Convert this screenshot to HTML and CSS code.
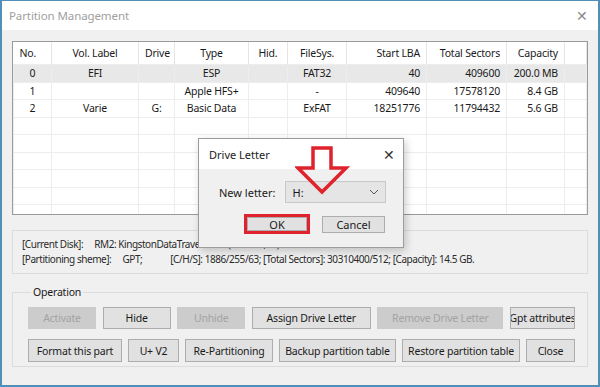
FILE: index.html
```html
<!DOCTYPE html>
<html lang="en">
<head>
    <meta charset="UTF-8">
    <meta name="viewport" content="width=device-width, initial-scale=1.0">
    <title>Partition Management</title>
    <link rel="stylesheet" href="styles.css">
</head>
<body>
    <div class="window">
        <!-- Title bar -->
        <header class="title-bar">
            <span class="title">Partition Management</span>
            <span class="close">&#x2715;</span>
        </header>

        <div class="content">
            <!-- Partition list -->
            <div class="list-view">
                <table class="grid">
                    <colgroup>
                        <col class="c-no"><col class="c-label"><col class="c-drive"><col class="c-type"><col class="c-hid">
                        <col class="c-fs"><col class="c-lba"><col class="c-sec"><col class="c-cap"><col>
                    </colgroup>
                    <thead>
                        <tr>
                            <th class="left">No.</th>
                            <th>Vol. Label</th>
                            <th>Drive</th>
                            <th>Type</th>
                            <th>Hid.</th>
                            <th>FileSys.</th>
                            <th class="right">Start LBA</th>
                            <th class="right">Total Sectors</th>
                            <th class="right">Capacity</th>
                            <th></th>
                        </tr>
                    </thead>
                    <tbody>
                        <tr class="selected">
                            <td>0</td><td>EFI</td><td></td><td>ESP</td><td></td><td>FAT32</td>
                            <td class="right">40</td><td class="right">409600</td><td class="right">200.0 MB</td><td></td>
                        </tr>
                        <tr>
                            <td>1</td><td></td><td></td><td>Apple HFS+</td><td></td><td>-</td>
                            <td class="right">409640</td><td class="right">17578120</td><td class="right">8.4 GB</td><td></td>
                        </tr>
                        <tr>
                            <td>2</td><td>Varie</td><td>G:</td><td>Basic Data</td><td></td><td>ExFAT</td>
                            <td class="right">18251776</td><td class="right">11794432</td><td class="right">5.6 GB</td><td></td>
                        </tr>
                        <tr><td></td><td></td><td></td><td></td><td></td><td></td><td></td><td></td><td></td><td></td></tr>
                        <tr><td></td><td></td><td></td><td></td><td></td><td></td><td></td><td></td><td></td><td></td></tr>
                        <tr><td></td><td></td><td></td><td></td><td></td><td></td><td></td><td></td><td></td><td></td></tr>
                        <tr><td></td><td></td><td></td><td></td><td></td><td></td><td></td><td></td><td></td><td></td></tr>
                        <tr><td></td><td></td><td></td><td></td><td></td><td></td><td></td><td></td><td></td><td></td></tr>
                        <tr><td></td><td></td><td></td><td></td><td></td><td></td><td></td><td></td><td></td><td></td></tr>
                    </tbody>
                </table>
            </div>

            <!-- Disk info -->
            <div class="info-box">
                <p><span class="key">[Current Disk]:</span> RM2: KingstonDataTraveler 3.0 (14.5 GB, G:)</p>
                <p><span class="key">[Partitioning sheme]:</span> GPT;<span class="gap"></span>[C/H/S]: 1886/255/63; [Total Sectors]: 30310400/512; [Capacity]: 14.5 GB.</p>
            </div>

            <!-- Operations -->
            <fieldset class="operation">
                <legend>Operation</legend>
                <div class="btn-row">
                    <button class="btn w68" disabled>Activate</button>
                    <button class="btn w68">Hide</button>
                    <button class="btn w68" disabled>Unhide</button>
                    <button class="btn w119">Assign Drive Letter</button>
                    <button class="btn w126" disabled>Remove Drive Letter</button>
                    <button class="btn w65">Gpt attributes</button>
                </div>
                <div class="btn-row">
                    <button class="btn w94">Format this part</button>
                    <button class="btn w51">U+ V2</button>
                    <button class="btn w88">Re-Partitioning</button>
                    <button class="btn w117">Backup partition table</button>
                    <button class="btn w118">Restore partition table</button>
                    <button class="btn w49">Close</button>
                </div>
            </fieldset>
        </div>

        <!-- Drive Letter dialog -->
        <div class="dialog">
            <div class="dialog-title">
                <span>Drive Letter</span>
                <span class="dialog-close">&#x2715;</span>
            </div>
            <div class="dialog-body">
                <div class="field">
                    <label>New letter:</label>
                    <div class="select">
                        <span>H:</span>
                        <svg class="chevron" width="10" height="6" viewBox="0 0 10 6">
                            <polyline points="1,1 5,5 9,1" fill="none" stroke="#555" stroke-width="1"/>
                        </svg>
                    </div>
                </div>
                <div class="dialog-buttons">
                    <button class="btn btn-ok">OK</button>
                    <button class="btn btn-cancel">Cancel</button>
                </div>
            </div>
        </div>

        <!-- Red annotation arrow -->
        <svg class="arrow" width="56" height="52" viewBox="0 0 56 52">
            <polygon points="18,2 36,2 36,22 51,22 27,46 3,22 18,22" fill="none" stroke="#e0222c" stroke-width="3.5" stroke-linejoin="miter"/>
        </svg>
    </div>
</body>
</html>
```

FILE: styles.css
```css
/* General */
body {
    margin: 0;
    font-family: 'Noto Sans', sans-serif;
    font-size: 10.5px;
    letter-spacing: -0.2px;
    color: #1a1a1a;
}

.window {
    position: relative;
    width: 600px;
    height: 387px;
    box-sizing: border-box;
    border: 2px solid #4f8fb8;
    border-top: 1px solid #4f8fb8;
    background-color: #f0f0f0;
    overflow: hidden;
}

/* Title bar */
.title-bar {
    height: 29px;
    background-color: #fff;
    display: flex;
    align-items: center;
    justify-content: space-between;
    padding: 0 10px 0 7px;
}

.title {
    font-size: 11.5px;
    letter-spacing: -0.1px;
    color: #a0a0a0;
}

.close {
    font-size: 14px;
    color: #8a8a8a;
}

.content {
    padding: 11px 10px 0 10px;
}

/* List view */
.list-view {
    height: 172px;
    background-color: #fff;
    border: 1px solid #9a9a9a;
    overflow: hidden;
}

.grid {
    width: 100%;
    border-collapse: collapse;
    table-layout: fixed;
}

.c-no { width: 38px; }
.c-label { width: 87px; }
.c-drive { width: 36px; }
.c-type { width: 74px; }
.c-hid { width: 39px; }
.c-fs { width: 59px; }
.c-lba { width: 80px; }
.c-sec { width: 80px; }
.c-cap { width: 58px; }

.grid th {
    height: 22px;
    font-weight: normal;
    text-align: center;
    border-right: 1px solid #e5e5e5;
    padding: 0 6px;
    white-space: nowrap;
    overflow: hidden;
}

.grid td {
    height: 16.5px;
    padding: 0 6px;
    text-align: center;
    border: 1px solid #ededed;
    white-space: nowrap;
    overflow: hidden;
    line-height: 14px;
}

.grid .left { text-align: left; }
.grid .right { text-align: right; }

.grid tr.selected td {
    background-color: #e8e8e8;
}

/* Info box */
.info-box {
    margin-top: 15px;
    height: 44px;
    border: 1px solid #dcdcdc;
    box-sizing: border-box;
    padding: 6px 9px;
    color: #2a2a2a;
    font-size: 10px;
    letter-spacing: -0.45px;
}

.info-box p {
    margin: 0;
    line-height: 15px;
    white-space: nowrap;
}

.info-box .key {
    margin-right: 9px;
}

.info-box .gap {
    display: inline-block;
    width: 28px;
}

/* Operation group */
.operation {
    margin: 11px 0 0 0;
    height: 82px;
    box-sizing: border-box;
    border: 1px solid #dcdcdc;
    padding: 8px 12px 0 15px;
}

.operation legend {
    padding: 0 2px;
    margin-left: 3px;
    color: #1a1a1a;
}

.btn-row {
    display: flex;
    justify-content: space-between;
    margin-bottom: 10px;
}

.btn {
    height: 22px;
    padding: 0;
    font-family: 'Noto Sans', sans-serif;
    font-size: 10.5px;
    letter-spacing: -0.2px;
    color: #1a1a1a;
    background-color: #e1e1e1;
    border: 1px solid #adadad;
    white-space: nowrap;
    overflow: hidden;
    display: flex;
    align-items: center;
    justify-content: center;
}

.btn:disabled {
    background-color: #cccccc;
    border-color: #cccccc;
    color: #a3a3a3;
}

.btn-row + .btn-row .btn { height: 23px; }

.w49 { width: 49px; }
.w51 { width: 51px; }
.w65 { width: 65px; }
.w68 { width: 68px; }
.w88 { width: 88px; }
.w94 { width: 94px; }
.w117 { width: 117px; }
.w118 { width: 118px; }
.w119 { width: 119px; }
.w126 { width: 126px; }

/* Dialog */
.dialog {
    position: absolute;
    left: 196px;
    top: 137px;
    width: 206px;
    height: 110px;
    box-sizing: border-box;
    border: 1px solid #9c9c9c;
    background-color: #f0f0f0;
    box-shadow: 2px 3px 8px rgba(0, 0, 0, 0.2);
    font-size: 11px;
    letter-spacing: 0;
}

.dialog-title {
    height: 30px;
    background-color: #fff;
    display: flex;
    align-items: center;
    justify-content: space-between;
    padding: 0 8px 0 10px;
}

.dialog-close {
    font-size: 14px;
    color: #333;
}

.dialog-body {
    padding: 12px 14px 0 20px;
}

.field {
    display: flex;
    align-items: center;
    gap: 9px;
}

.select {
    width: 101px;
    height: 22px;
    box-sizing: border-box;
    border: 1px solid #c8c8c8;
    background-color: #e5e5e5;
    display: flex;
    align-items: center;
    justify-content: space-between;
    padding: 0 6px 0 7px;
}

.dialog-buttons {
    display: flex;
    gap: 12px;
    margin-top: 11px;
    padding-left: 25px;
}

.dialog .btn {
    font-size: 11px;
    letter-spacing: 0;
}

.btn-ok {
    width: 66px;
    height: 20px;
    border: 3px solid #e0222c;
    box-shadow: inset 0 0 0 1px #adadad;
}

.btn-cancel {
    width: 63px;
    height: 17px;
    margin-top: 2px;
}

/* Annotation */
.arrow {
    position: absolute;
    left: 293px;
    top: 145px;
}
```
